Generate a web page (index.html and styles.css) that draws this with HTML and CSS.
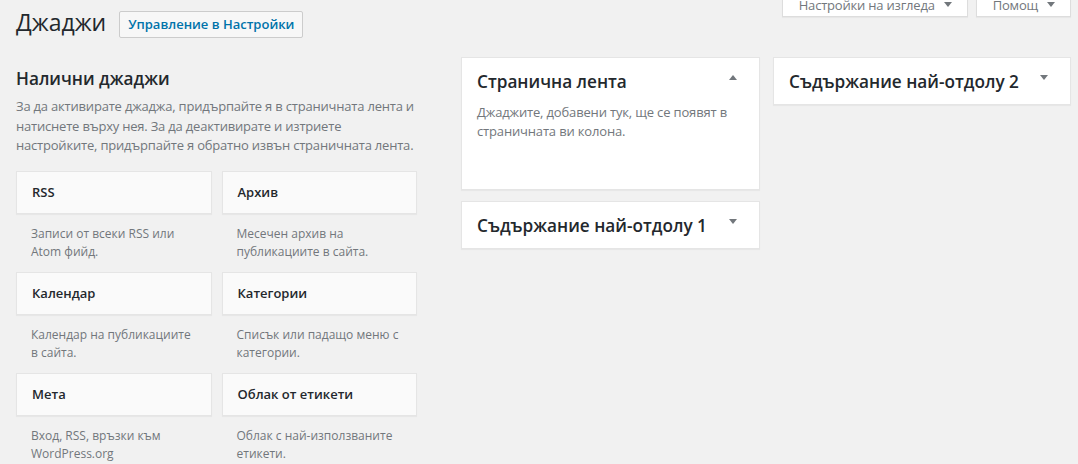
FILE: index.html
```html
<!DOCTYPE html>
<html lang="bg">
<head>
<meta charset="utf-8">
<title>Джаджи</title>
<link rel="stylesheet" href="styles.css">
</head>
<body>
<div class="wrap">
  <header class="page-head">
    <div class="title-group">
      <h1 class="page-title">Джаджи</h1>
      <a class="title-action" href="#">Управление в Настройки</a>
    </div>
    <div class="screen-tabs">
      <div class="tab">Настройки на изгледа<span class="caret caret-down"></span></div>
      <div class="tab">Помощ<span class="caret caret-down"></span></div>
    </div>
  </header>

  <main class="columns">
    <section class="available">
      <h2 class="col-title">Налични джаджи</h2>
      <p class="avail-desc">За да активирате джаджа, придърпайте я в страничната лента и натиснете върху нея. За да деактивирате и изтриете настройките, придърпайте я обратно извън страничната лента.</p>
      <div class="widget-grid">
        <div class="widget">
          <div class="widget-top">RSS</div>
          <p class="widget-desc">Записи от всеки RSS или Atom фийд.</p>
        </div>
        <div class="widget">
          <div class="widget-top">Архив</div>
          <p class="widget-desc">Месечен архив на публикациите в сайта.</p>
        </div>
        <div class="widget">
          <div class="widget-top">Календар</div>
          <p class="widget-desc">Календар на публикациите в сайта.</p>
        </div>
        <div class="widget">
          <div class="widget-top">Категории</div>
          <p class="widget-desc">Списък или падащо меню с категории.</p>
        </div>
        <div class="widget">
          <div class="widget-top">Мета</div>
          <p class="widget-desc">Вход, RSS, връзки към WordPress.org</p>
        </div>
        <div class="widget">
          <div class="widget-top">Облак от етикети</div>
          <p class="widget-desc">Облак с най-използваните етикети.</p>
        </div>
      </div>
    </section>

    <section class="sidebar-col sidebar-col-mid">
      <div class="sidebar-box">
        <div class="sidebar-head">
          <h2 class="col-title">Странична лента</h2>
          <span class="caret caret-up"></span>
        </div>
        <p class="sidebar-desc">Джаджите, добавени тук, ще се появят в страничната ви колона.</p>
        <div class="sidebar-drop"></div>
      </div>
      <div class="sidebar-box">
        <div class="sidebar-head">
          <h2 class="col-title">Съдържание най-отдолу 1</h2>
          <span class="caret caret-down"></span>
        </div>
      </div>
    </section>

    <section class="sidebar-col sidebar-col-right">
      <div class="sidebar-box">
        <div class="sidebar-head">
          <h2 class="col-title">Съдържание най-отдолу 2</h2>
          <span class="caret caret-down"></span>
        </div>
      </div>
    </section>
  </main>
</div>
</body>
</html>
```

FILE: styles.css
```css
html, body {
  margin: 0;
  padding: 0;
}

body {
  background: #f1f1f1;
  font-family: "Open Sans", "Noto Sans", sans-serif;
  font-size: 13px;
  color: #444;
}

.wrap {
  padding: 0 7px 0 16px;
}

/* ---------- header ---------- */
.page-head {
  display: flex;
  justify-content: space-between;
  align-items: flex-start;
  height: 57px;
}

.title-group {
  display: flex;
  align-items: flex-start;
  gap: 13px;
  padding-top: 8px;
}

.page-title {
  margin: 0;
  font-size: 23px;
  font-weight: 400;
  line-height: 29px;
  color: #23282d;
}

.title-action {
  margin-top: 3px;
  padding: 4px 8px;
  border: 1px solid #ccc;
  border-radius: 2px;
  background: #f7f7f7;
  color: #0073aa;
  font-size: 13px;
  font-weight: 600;
  line-height: 17px;
  text-decoration: none;
}

.screen-tabs {
  display: flex;
  gap: 8px;
  margin-top: -12px;
}

.tab {
  display: flex;
  align-items: center;
  padding: 6px 15px 0 16px;
  line-height: 22px;
  border: 1px solid #ddd;
  border-top: 0;
  background: #fff;
  color: #72777c;
  letter-spacing: -0.2px;
  box-shadow: 0 1px 1px rgba(0, 0, 0, 0.04);
}

.tab .caret {
  margin-left: 9px;
  margin-top: -2px;
}

/* carets */
.caret {
  display: block;
  width: 0;
  height: 0;
  border-left: 4px solid transparent;
  border-right: 4px solid transparent;
  flex: none;
}

.caret-down {
  border-top: 5px solid #72777c;
}

.caret-up {
  border-bottom: 5px solid #72777c;
}

/* ---------- columns ---------- */
.columns {
  display: flex;
  align-items: flex-start;
  gap: 13px;
}

.available {
  width: 401px;
  margin-right: 31px;
}

.sidebar-col-mid {
  width: 299px;
}

.sidebar-col-right {
  width: 298px;
}

.col-title {
  margin: 0;
  font-size: 17.2px;
  font-weight: 600;
  line-height: 17px;
  color: #23282d;
}

.available .col-title {
  margin-top: 13px;
}

.avail-desc {
  margin: 10px 0 0;
  line-height: 19.5px;
  color: #72777c;
  letter-spacing: -0.2px;
}

.widget-grid {
  display: grid;
  grid-template-columns: 1fr 1fr;
  column-gap: 10px;
  margin-top: 15px;
}

.widget-top {
  padding: 14px 15px;
  line-height: 13px;
  font-weight: 600;
  color: #23282d;
  background: #fafafa;
  border: 1px solid #e5e5e5;
  box-shadow: 0 1px 1px rgba(0, 0, 0, 0.04);
}

.widget-desc {
  margin: 0;
  padding: 11px 15px 10px;
  font-size: 12px;
  line-height: 18.5px;
  color: #72777c;
}

/* ---------- sidebars ---------- */
.sidebar-box {
  background: #fff;
  border: 1px solid #e5e5e5;
  box-shadow: 0 1px 1px rgba(0, 0, 0, 0.04);
}

.sidebar-box + .sidebar-box {
  margin-top: 11px;
}

.sidebar-head {
  display: flex;
  justify-content: space-between;
  align-items: flex-start;
  padding: 15px 22px 14px 15px;
}

.sidebar-head .caret {
  margin-top: 2px;
}

.sidebar-desc {
  margin: -1px 0 0;
  padding: 0 15px;
  line-height: 18.7px;
  color: #72777c;
  letter-spacing: -0.16px;
}

.sidebar-drop {
  height: 49px;
}
```
